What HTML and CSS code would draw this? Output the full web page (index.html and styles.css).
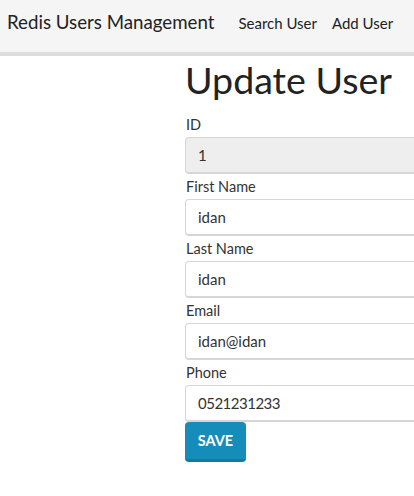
FILE: index.html
```html
<!DOCTYPE html>
<html>
<head>
<meta charset="utf-8">
<link rel="stylesheet" href="styles.css">
</head>
<body>
<nav class="navbar">
  <span class="brand">Redis Users Management</span>
  <span class="nav-link">Search User</span>
  <span class="nav-link">Add User</span>
</nav>
<main class="content">
  <h1 class="title">Update User</h1>
  <form class="form">
    <label class="label">ID</label>
    <input class="control control-readonly" value="1" readonly>
    <label class="label">First Name</label>
    <input class="control" value="idan">
    <label class="label">Last Name</label>
    <input class="control" value="idan">
    <label class="label">Email</label>
    <input class="control" value="idan@idan">
    <label class="label">Phone</label>
    <input class="control control-last control-digits" value="0521231233">
    <button type="button" class="btn">SAVE</button>
  </form>
</main>
</body>
</html>
```
FILE: styles.css
```css
html, body {
  margin: 0;
  padding: 0;
  overflow: hidden;
  background: #ffffff;
  font-family: Lato, "Open Sans", sans-serif;
  color: #222222;
}
.navbar {
  box-sizing: border-box;
  display: flex;
  align-items: baseline;
  height: 56px;
  padding: 11px 0 0 7px;
  background: #f5f5f5;
  border-bottom: 4px solid #dddddd;
  white-space: nowrap;
}
.brand {
  font-size: 18.7px;
  color: #222222;
  margin-right: 24px;
}
.nav-link {
  font-size: 15px;
  color: #222222;
  margin-right: 15px;
}
.content {
  padding-left: 185px;
}
.title {
  margin: 2px 0 14px 0;
  font-size: 37.6px;
  font-weight: 400;
  line-height: 43px;
  color: #222222;
}
.form {
  display: flex;
  flex-direction: column;
  align-items: flex-start;
  width: 320px;
}
.label {
  font-size: 14.5px;
  line-height: 20px;
  margin: 0 0 2px 1px;
  color: #333333;
}
.control {
  box-sizing: border-box;
  width: 320px;
  height: 37px;
  margin: 0 0 3px 0;
  padding: 8px 12px;
  font-family: inherit;
  font-size: 15px;
  color: #333333;
  border: 1px solid #d6d6d6;
  border-bottom-width: 2px;
  border-radius: 4px;
  background: #ffffff;
  outline: none;
}
.control-readonly {
  background: #eeeeee;
}
.control-last {
  margin-bottom: 0;
}
.control-digits {
  letter-spacing: -0.5px;
}
.btn {
  box-sizing: border-box;
  width: 61px;
  height: 40px;
  font-family: inherit;
  font-size: 14.5px;
  font-weight: 700;
  color: #ffffff;
  background: #158cba;
  border: none;
  border-bottom: 3px solid #127ba3;
  border-radius: 4px;
  padding: 0;
}
```
